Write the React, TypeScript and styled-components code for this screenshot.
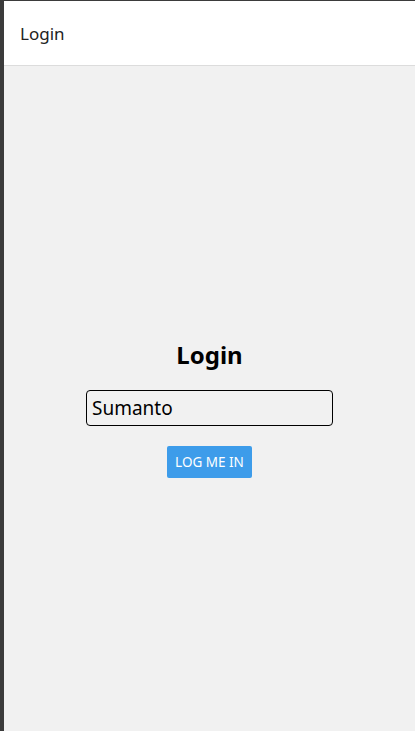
import React, { useState } from "react";
import styled, { createGlobalStyle } from "styled-components";

const GlobalStyle = createGlobalStyle`
  html, body {
    margin: 0;
    padding: 0;
    height: 100%;
  }

  body {
    font-family: "Noto Sans", "DejaVu Sans", sans-serif;
    background: #f1f1f1;
  }

  #root {
    height: 100%;
  }
`;

const Frame = styled.div`
  box-sizing: border-box;
  height: 731px;
  display: flex;
  flex-direction: column;
  border-left: 4px solid #3b3b3b;
  border-top: 1px solid #3b3b3b;
  background: #f1f1f1;
`;

const Header = styled.header`
  height: 64px;
  flex-shrink: 0;
  display: flex;
  align-items: center;
  padding: 0 16px;
  background: #ffffff;
  border-bottom: 1px solid #dcdcdc;
  color: #222;
  font-size: 17px;
`;

const Main = styled.main`
  flex: 1;
  display: flex;
  flex-direction: column;
  align-items: center;
  justify-content: center;
  padding-top: 20px;
`;

const Title = styled.h2`
  margin: 0 0 20px;
  font-size: 24px;
  font-weight: 700;
  color: #000;
  line-height: 30px;
`;

const NameInput = styled.input`
  box-sizing: border-box;
  width: 247px;
  height: 36px;
  padding: 0 5px;
  border: 1px solid #000;
  border-radius: 4px;
  background: transparent;
  font-family: inherit;
  font-size: 19px;
  color: #000;
  outline: none;
`;

const Button = styled.button`
  margin-top: 20px;
  height: 32px;
  padding: 0 8px;
  border: none;
  border-radius: 2px;
  background: #3d9cea;
  color: #fff;
  font-family: inherit;
  font-size: 13.5px;
  font-weight: 400;
  text-transform: uppercase;
  cursor: pointer;
`;

export default function App() {
  const [name, setName] = useState("Sumanto");

  return (
    <>
      <GlobalStyle />
      <Frame>
        <Header>Login</Header>
        <Main>
          <Title>Login</Title>
          <NameInput value={name} onChange={(e) => setName(e.target.value)} />
          <Button>Log me in</Button>
        </Main>
      </Frame>
    </>
  );
}
